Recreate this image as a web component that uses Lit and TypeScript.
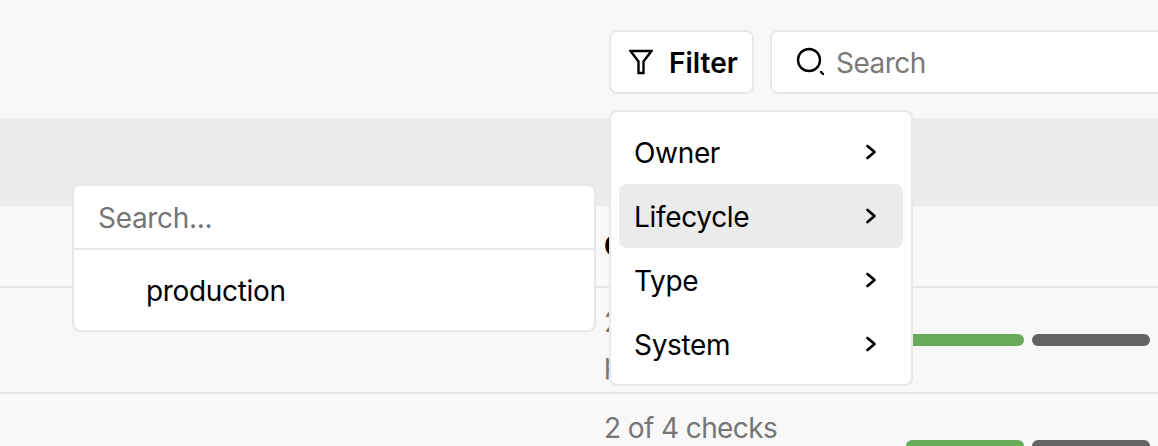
import { LitElement, html, css, svg } from "lit";
import { customElement } from "lit/decorators.js";

const chevron = svg`<path d="M2.5 2l7 6-7 6" fill="none" stroke="#000" stroke-width="2.7" stroke-linecap="round" stroke-linejoin="round"/>`;

@customElement("app-root")
export class AppRoot extends LitElement {
  static styles = css`
    :host {
      display: block;
      position: relative;
      width: 1158px;
      height: 446px;
      overflow: hidden;
      background: #f8f8f8;
      font-family: Inter, "Liberation Sans", sans-serif;
      font-size: 28px;
      letter-spacing: -0.33px;
      color: #000;
    }
    .toolbar {
      display: flex;
      gap: 16px;
      height: 118px;
      box-sizing: border-box;
      padding: 30px 0 0 609px;
      width: 1400px;
    }
    .btn,
    .search {
      height: 64px;
      box-sizing: border-box;
      background: #fff;
      border: 2px solid #e8e8e8;
      border-radius: 8px;
      display: flex;
      align-items: center;
    }
    .btn {
      width: 145px;
      padding-left: 18px;
      gap: 16px;
      font-weight: 600;
    }
    .btn span {
      padding-top: 1px;
      letter-spacing: 0;
    }
    .search {
      width: 500px;
      padding-left: 24px;
      gap: 10px;
      color: #7a7a7a;
    }
    .search span {
      padding-top: 2px;
      letter-spacing: -0.5px;
    }
    .band {
      height: 88px;
      background: #ebebeb;
    }
    .row {
      box-sizing: border-box;
      border-bottom: 2px solid #e4e4e4;
      padding-left: 604px;
      display: flex;
      position: relative;
    }
    .row.head {
      height: 82px;
      align-items: center;
      font-weight: 700;
    }
    .row.two {
      height: 106px;
    }
    .row.three {
      height: 60px;
      border-bottom: none;
    }
    .checks {
      width: 302px;
      color: #767676;
      line-height: 42px;
      padding-top: 13px;
      white-space: nowrap;
      letter-spacing: -0.6px;
    }
    .bars {
      display: flex;
      gap: 8px;
      padding-top: 46px;
    }
    .bar {
      width: 118px;
      height: 12px;
      border-radius: 6px;
    }
    .green {
      background: #67ab5b;
    }
    .grey {
      background: #636363;
    }
    .panel {
      position: absolute;
      box-sizing: border-box;
      background: #fff;
      border: 2px solid #e8e8e8;
      border-radius: 8px;
    }
    .menu {
      left: 609px;
      top: 110px;
      width: 304px;
      height: 276px;
      padding: 8px;
    }
    .item {
      height: 64px;
      display: flex;
      align-items: center;
      justify-content: space-between;
      padding: 0 26px 0 15px;
      border-radius: 8px;
    }
    .item span {
      padding-top: 1px;
    }
    .item.active {
      background: #ebebeb;
    }
    .item svg {
      display: block;
    }
    .pop {
      left: 72px;
      top: 184px;
      width: 524px;
      height: 148px;
    }
    .pop-search {
      height: 64px;
      box-sizing: border-box;
      border-bottom: 2px solid #e8e8e8;
      padding: 2px 0 0 24px;
      display: flex;
      align-items: center;
      color: #767676;
    }
    .pop-item {
      height: 82px;
      display: flex;
      align-items: center;
      padding-left: 72px;
    }
  `;

  render() {
    return html`
      <div class="toolbar">
        <div class="btn">
          <svg width="24" height="26" viewBox="0 0 24 26">
            <path d="M1.5 2h21l-8 10.5V24h-5V12.5z" fill="none" stroke="#000" stroke-width="2.4" stroke-linejoin="miter"/>
          </svg>
          <span>Filter</span>
        </div>
        <div class="search">
          <svg width="30" height="30" viewBox="0 0 30 30">
            <circle cx="13" cy="13" r="11" fill="none" stroke="#000" stroke-width="2.4"/>
            <path d="M25 25l2 2" fill="none" stroke="#000" stroke-width="2.4" stroke-linecap="round"/>
          </svg>
          <span>Search</span>
        </div>
      </div>
      <div class="band"></div>
      <div class="row head"><span>Checks</span></div>
      <div class="row two">
        <div class="checks">2 of 4 checks<br />passed</div>
        <div class="bars"><div class="bar green"></div><div class="bar grey"></div></div>
      </div>
      <div class="row three">
        <div class="checks">2 of 4 checks</div>
        <div class="bars"><div class="bar green"></div><div class="bar grey"></div></div>
      </div>
      <div class="panel pop">
        <div class="pop-search">Search...</div>
        <div class="pop-item">production</div>
      </div>
      <div class="panel menu">
        ${["Owner", "Lifecycle", "Type", "System"].map(
          (t) => html`<div class="item ${t === "Lifecycle" ? "active" : ""}">
            <span>${t}</span>
            <svg width="12" height="16" viewBox="0 0 12 16">${chevron}</svg>
          </div>`
        )}
      </div>
    `;
  }
}
